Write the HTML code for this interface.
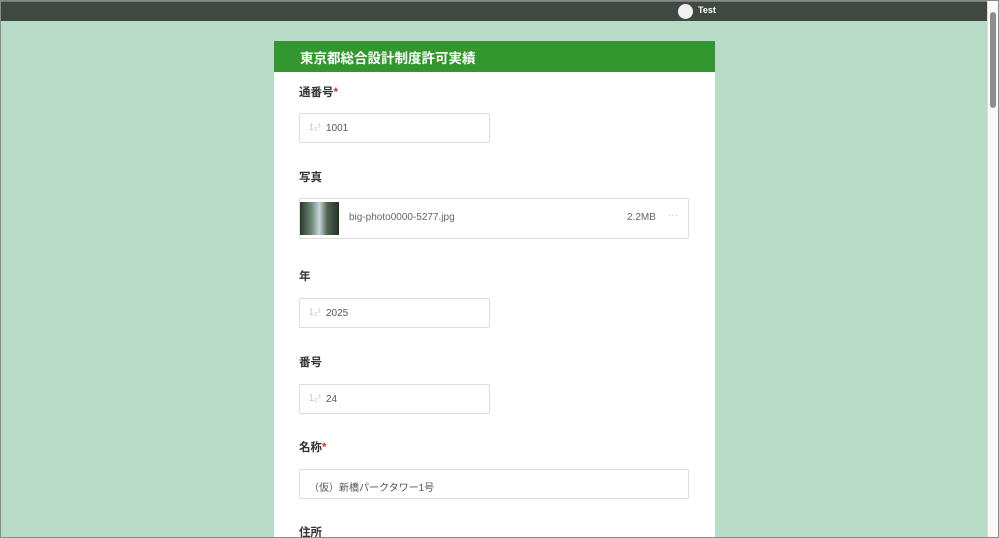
<!DOCTYPE html>
<html><head><meta charset="utf-8"><style>
*{margin:0;padding:0;box-sizing:border-box}
html,body{width:999px;height:538px;overflow:hidden}
body{background:#b9dcc8;font-family:"Liberation Sans","Noto Sans CJK JP",sans-serif;position:relative}
.bd{position:absolute;left:0;top:0;width:999px;height:538px;border:1px solid #8a8a8a;pointer-events:none}
.top{position:absolute;left:0;top:0;width:988px;height:21px;background:#3e4a41;border-top:2px solid #777}
.av{position:absolute;left:678px;top:2px;width:15px;height:15px;border-radius:50%;background:#f2f2f2}
.tn{position:absolute;left:698px;top:3px;font-size:9px;color:#fff;font-weight:bold}
.sb{position:absolute;left:987px;top:0;width:11px;height:538px;background:#fafafa;border-left:1px solid #ddd}
.th{position:absolute;left:2px;top:12px;width:6px;height:96px;background:#8e8e8e;border-radius:3px}
.card{position:absolute;left:274px;top:41px;width:441px;height:500px;background:#fff}
.hd{height:31px;background:#33962f;color:#fff;font-weight:bold;font-size:13.5px;padding:6px 0 0 26px}
.lb{position:absolute;left:25px;font-size:11.5px;font-weight:bold;color:#333}
.lb i{color:#c0392b;font-style:normal}
.in{position:absolute;left:25px;width:191px;height:30px;border:1px solid #ddd;border-radius:2px;font-size:10px;color:#555;padding:9px 0 0 26px}
.in .ic{position:absolute;left:9px;top:8px;font-size:9px;color:#cbbbd8}
.ph{position:absolute;left:25px;top:157px;width:390px;height:41px;border:1px solid #ddd;border-radius:2px;font-size:10px;color:#666}
.img{position:absolute;left:0;top:3px;width:39px;height:33px;background:linear-gradient(90deg,#2b3a2a,#6f8a78 30%,#c9d3db 50%,#4f6552 70%,#243024)}
</style></head><body>
<div class="top"><div class="av"></div><div class="tn">Test</div></div>
<div class="sb"><div class="th"></div></div>
<div class="card">
<div class="hd">東京都総合設計制度許可実績</div>
<div class="lb" style="top:43px">通番号<i>*</i></div>
<div class="in" style="top:72px"><span class="ic">1₂³</span>1001</div>
<div class="lb" style="top:128px">写真</div>
<div class="ph"><div class="img"></div><span style="position:absolute;left:49px;top:13px">big-photo0000-5277.jpg</span><span style="position:absolute;left:327px;top:13px">2.2MB</span><span style="position:absolute;left:368px;top:11px;color:#bbb">···</span></div>
<div class="lb" style="top:227px">年</div>
<div class="in" style="top:257px"><span class="ic">1₂³</span>2025</div>
<div class="lb" style="top:313px">番号</div>
<div class="in" style="top:343px"><span class="ic">1₂³</span>24</div>
<div class="lb" style="top:398px">名称<i>*</i></div>
<div class="in" style="top:428px;width:390px;padding-left:9px">（仮）新橋パークタワー1号</div>
<div class="lb" style="top:483px">住所</div>
</div>
<div class="bd"></div>
</body></html>
